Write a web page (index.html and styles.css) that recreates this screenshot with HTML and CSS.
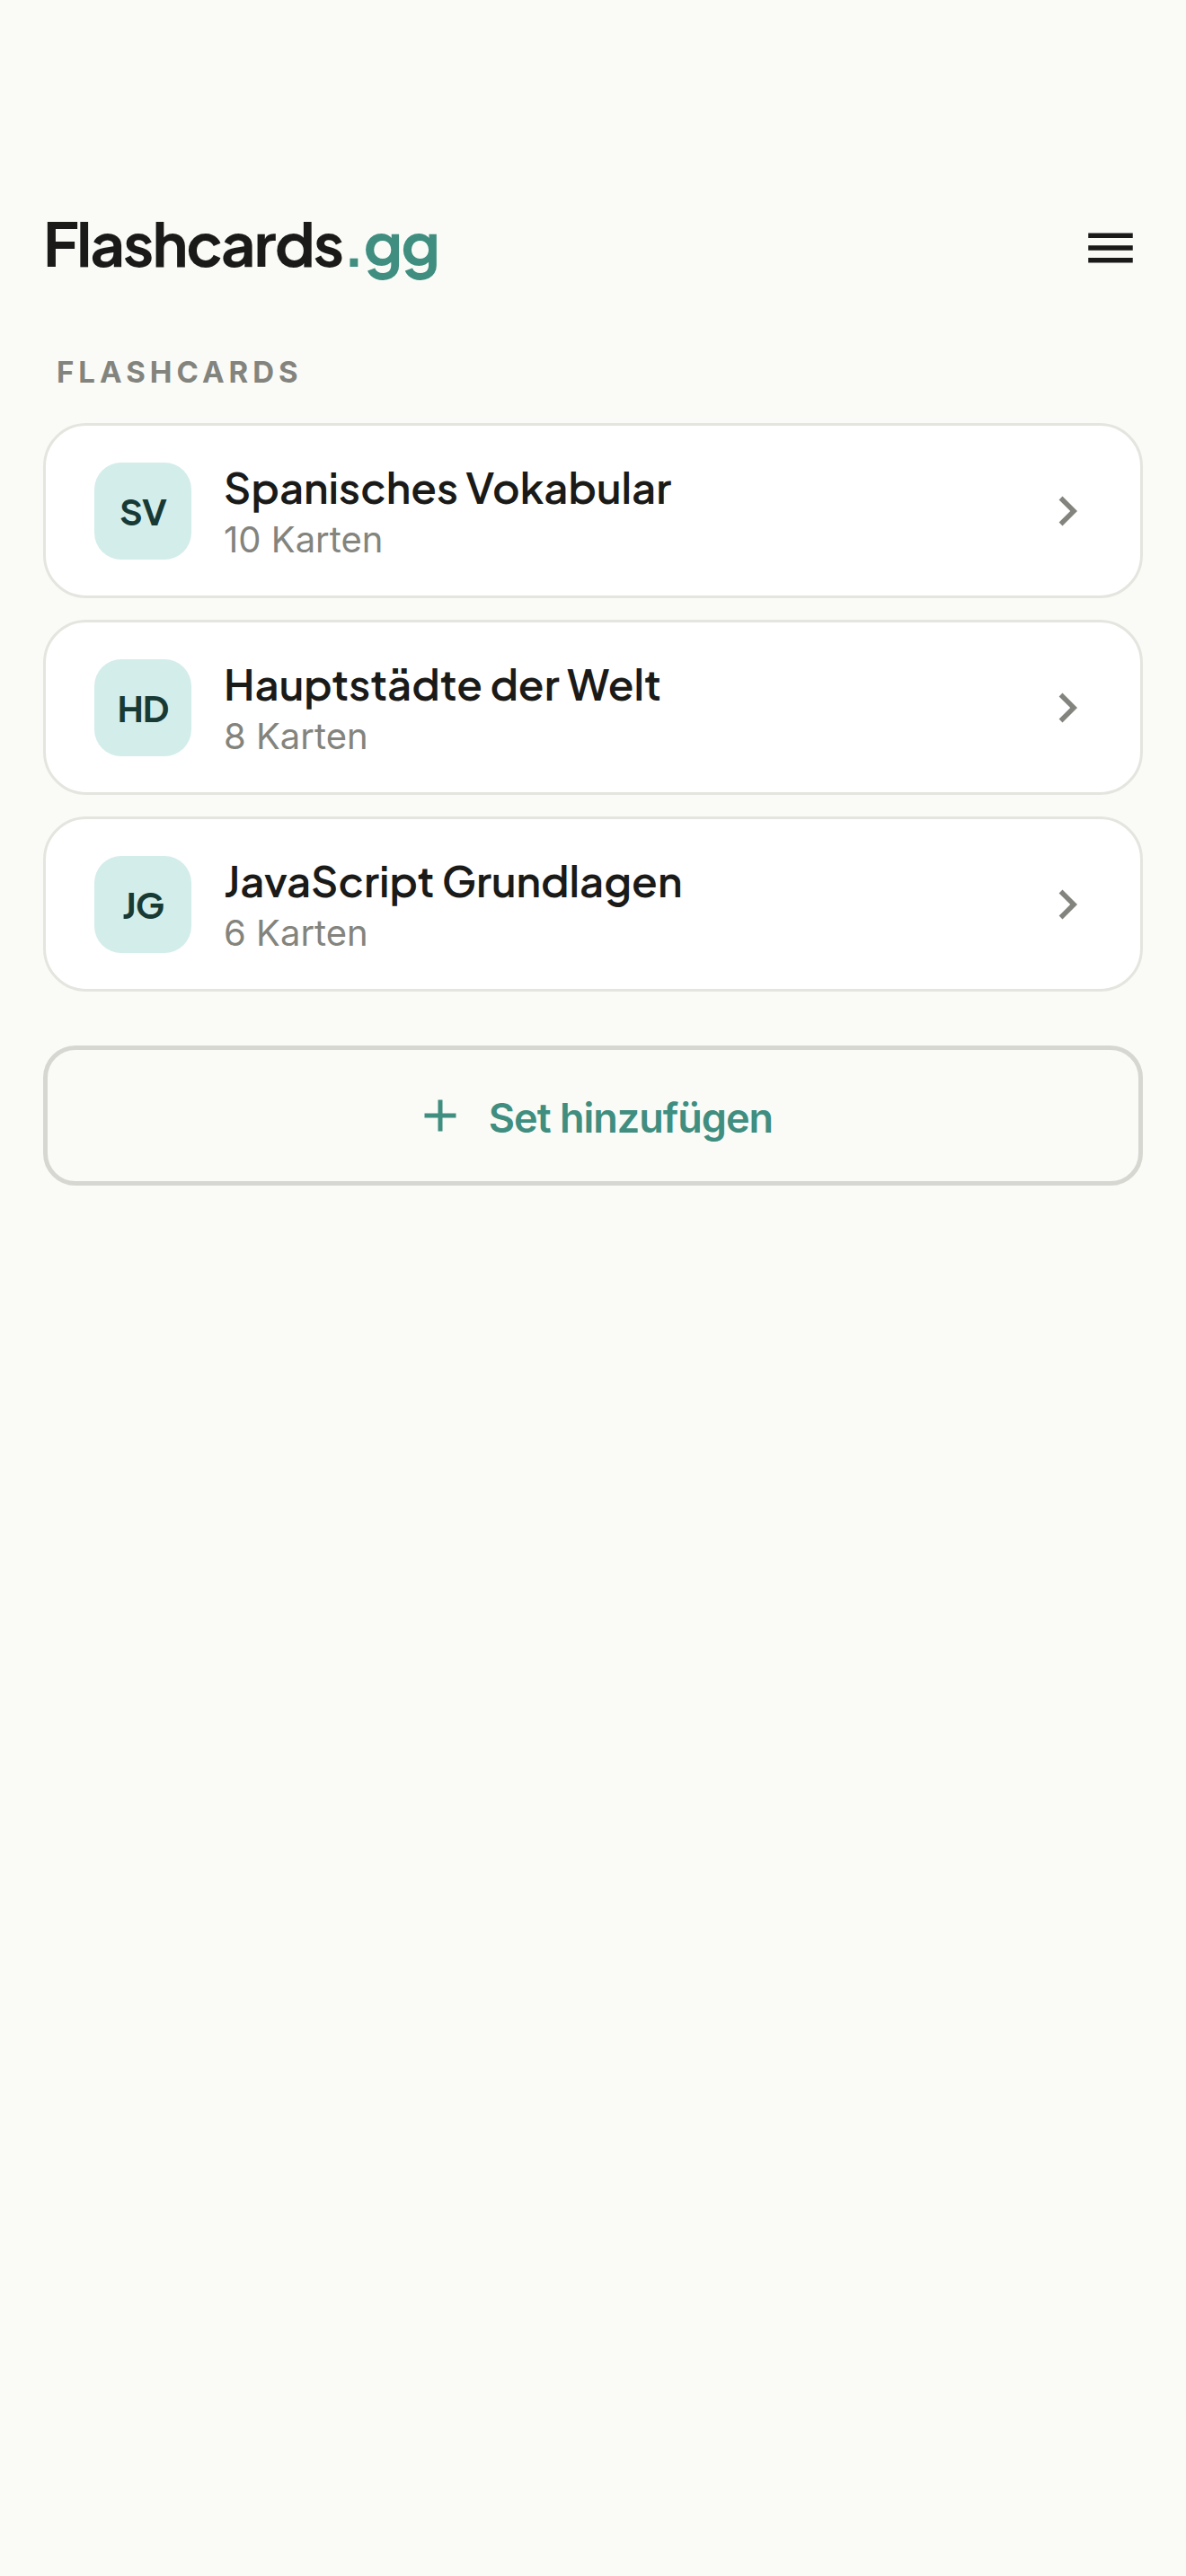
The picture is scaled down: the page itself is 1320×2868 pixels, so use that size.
FILE: index.html
```html
<!DOCTYPE html>
<html lang="de">
<head>
    <meta charset="UTF-8">
    <meta name="viewport" content="width=device-width, initial-scale=1.0">
    <title>Flashcards.gg</title>
    <link rel="stylesheet" href="styles.css">
</head>
<body>
    <header class="kopf">
        <h1 class="logo">Flashcards<span class="logo-endung">.gg</span></h1>
        <button type="button" class="menu-button" aria-label="Menü">
            <svg class="icon" viewBox="0 0 24 24" aria-hidden="true"><path d="M3 18h18v-2H3v2zm0-5h18v-2H3v2zm0-7v2h18V6H3z"/></svg>
        </button>
    </header>
    <main>
        <h2 class="abschnitt">FLASHCARDS</h2>
        <ul class="set-liste">
            <li>
                <a href="#spanisch" class="set">
                    <span class="kuerzel">SV</span>
                    <span class="set-text">
                        <span class="set-titel">Spanisches Vokabular</span>
                        <span class="set-anzahl">10 Karten</span>
                    </span>
                    <svg class="icon pfeil" viewBox="0 0 24 24" aria-hidden="true"><path d="M10 6L8.59 7.41 13.17 12l-4.58 4.59L10 18l6-6z"/></svg>
                </a>
            </li>
            <li>
                <a href="#hauptstaedte" class="set">
                    <span class="kuerzel">HD</span>
                    <span class="set-text">
                        <span class="set-titel">Hauptstädte der Welt</span>
                        <span class="set-anzahl">8 Karten</span>
                    </span>
                    <svg class="icon pfeil" viewBox="0 0 24 24" aria-hidden="true"><path d="M10 6L8.59 7.41 13.17 12l-4.58 4.59L10 18l6-6z"/></svg>
                </a>
            </li>
            <li>
                <a href="#javascript" class="set">
                    <span class="kuerzel">JG</span>
                    <span class="set-text">
                        <span class="set-titel">JavaScript Grundlagen</span>
                        <span class="set-anzahl">6 Karten</span>
                    </span>
                    <svg class="icon pfeil" viewBox="0 0 24 24" aria-hidden="true"><path d="M10 6L8.59 7.41 13.17 12l-4.58 4.59L10 18l6-6z"/></svg>
                </a>
            </li>
        </ul>
        <button type="button" class="neues-set">
            <svg class="plus" viewBox="0 0 24 24" aria-hidden="true"><path d="M19 13h-6v6h-2v-6H5v-2h6V5h2v6h6v2z"/></svg>
            <span class="neues-set-text">Set hinzufügen</span>
        </button>
    </main>
</body>
</html>
```
FILE: styles.css
```css
* {
    box-sizing: border-box;
}

body {
    margin: 0;
    padding: 228px 48px 48px;
    min-height: 100vh;
    font-family: "Plus Jakarta Sans", Inter, sans-serif;
    background-color: #fafbf7;
    color: #1a1a18;
}

h1, h2, ul {
    margin: 0;
    padding: 0;
}

button {
    border: none;
    background: none;
    font-family: inherit;
    cursor: pointer;
}

.icon {
    display: block;
    width: 66px;
    height: 66px;
    fill: currentColor;
    flex-shrink: 0;
}

/* Kopfzeile */
.kopf {
    display: flex;
    justify-content: space-between;
    align-items: center;
    height: 96px;
}

.logo {
    padding-bottom: 12px;
    font-size: 67px;
    font-weight: 700;
    line-height: 84px;
    letter-spacing: -2px;
}

.logo-endung {
    color: #3f8e80;
}

.menu-button {
    padding: 0;
    margin-right: 3px;
    color: #1a1a18;
}

/* Liste der Sets */
.abschnitt {
    margin: 66px 15px 33px;
    font-family: Inter, sans-serif;
    font-size: 33px;
    font-weight: 700;
    line-height: 48px;
    letter-spacing: 5px;
    color: #83847d;
}

.set-liste {
    display: flex;
    flex-direction: column;
    gap: 24px;
    list-style-type: none;
}

.set {
    display: flex;
    align-items: center;
    gap: 36px;
    min-height: 195px;
    padding: 30px 48px 30px 54px;
    border: 3px solid #e4e5df;
    border-radius: 48px;
    background-color: white;
    color: inherit;
    text-decoration: none;
}

.kuerzel {
    display: flex;
    align-items: center;
    justify-content: center;
    width: 108px;
    height: 108px;
    border-radius: 30px;
    background-color: #d3edea;
    color: #183a35;
    font-size: 40px;
    font-weight: 700;
    letter-spacing: -1px;
    flex-shrink: 0;
}

.set-text {
    display: flex;
    flex-direction: column;
    flex-grow: 1;
    padding-top: 3px;
}

.set-titel {
    font-size: 47px;
    font-weight: 600;
    line-height: 60px;
}

.set-anzahl {
    font-family: Inter, sans-serif;
    font-size: 40px;
    font-weight: 400;
    line-height: 57px;
    color: #83847d;
}

.pfeil {
    color: #83847d;
}

/* Neues Set */
.neues-set {
    display: flex;
    align-items: center;
    justify-content: center;
    gap: 24px;
    width: 100%;
    min-height: 156px;
    margin-top: 60px;
    border: 5px solid #d7d7d2;
    border-radius: 36px;
    color: #3f8e80;
}

.neues-set-text {
    padding-top: 6px;
    font-family: Inter, sans-serif;
    font-size: 45px;
    font-weight: 600;
    line-height: 60px;
    letter-spacing: -1px;
}

.plus {
    width: 60px;
    height: 60px;
    fill: currentColor;
}
```
